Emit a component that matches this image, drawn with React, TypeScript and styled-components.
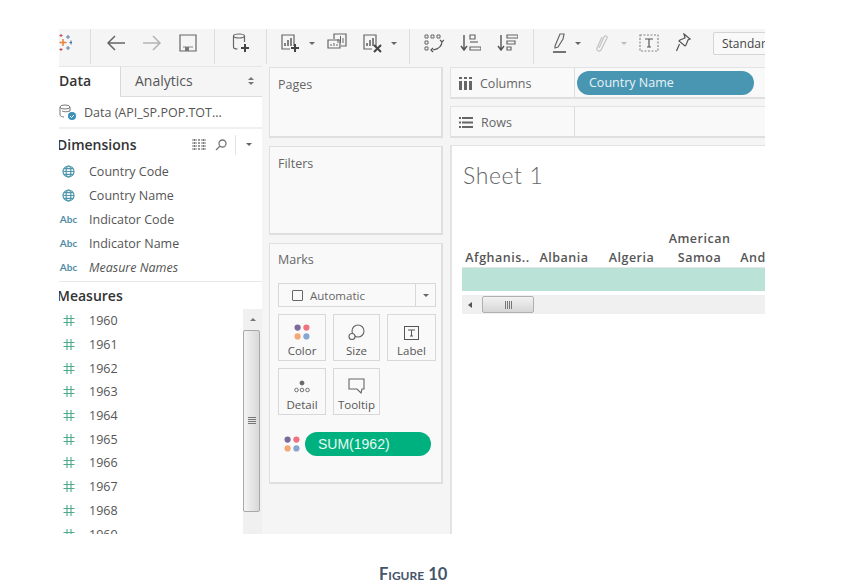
import styled, { createGlobalStyle } from "styled-components";
import type { ReactNode } from "react";

const GlobalStyle = createGlobalStyle`
  html, body {
    margin: 0;
    padding: 0;
    background: #fff;
    font-family: "Open Sans", "Lato", sans-serif;
  }
`;

const Page = styled.div`
  width: 859px;
  height: 588px;
  padding: 29px 0 0 59px;
  box-sizing: border-box;
  overflow: hidden;
`;

const Shot = styled.div`
  width: 706px;
  height: 505px;
  background: #f5f5f5;
  overflow: hidden;
  display: flex;
  flex-direction: column;
`;

const Toolbar = styled.div`
  height: 37px;
  flex: none;
  box-sizing: border-box;
  padding-bottom: 9px;
  display: flex;
  align-items: center;
  overflow: hidden;
`;

const ToolIcon = styled.svg<{ $ml: number }>`
  flex: none;
  margin-left: ${(p) => p.$ml}px;
`;

const ToolDivider = styled.div<{ $ml: number }>`
  flex: none;
  align-self: flex-start;
  width: 1px;
  height: 35px;
  background: #dedede;
  margin-left: ${(p) => p.$ml}px;
`;

const Caret = styled.div<{ $ml: number; $light?: boolean }>`
  flex: none;
  margin-left: ${(p) => p.$ml}px;
  width: 0;
  height: 0;
  border-left: 3px solid transparent;
  border-right: 3px solid transparent;
  border-top: 3px solid ${(p) => (p.$light ? "#bdbdbd" : "#666")};
`;

const FitSelect = styled.div`
  flex: none;
  margin-left: 22px;
  width: 80px;
  height: 23px;
  box-sizing: border-box;
  padding-left: 8px;
  border: 1px solid #d4d4d4;
  border-radius: 2px;
  font-size: 12px;
  line-height: 21px;
  color: #444;
  background: #f9f9f9;
  overflow: hidden;
  white-space: nowrap;
`;

const Workspace = styled.div`
  flex: 1;
  min-height: 0;
  display: grid;
  grid-template-columns: 203px 174px 1fr;
  column-gap: 7px;
`;

const LeftPane = styled.div`
  background: #fff;
  display: flex;
  flex-direction: column;
  min-height: 0;
  overflow: hidden;
  border-top: 1px solid #e6e6e6;
`;

const TabRow = styled.div`
  display: flex;
  height: 30px;
  flex: none;
`;

const DataTab = styled.div`
  width: 61px;
  font-size: 14px;
  font-weight: 600;
  color: #333;
  line-height: 28px;
  box-sizing: border-box;
`;

const AnalyticsTab = styled.div`
  flex: 1;
  display: flex;
  align-items: center;
  justify-content: space-between;
  padding: 0 8px 2px 14px;
  background: #f5f5f5;
  border-left: 1px solid #d8d8d8;
  border-bottom: 1px solid #dcdcdc;
  font-size: 14px;
  color: #555;
`;

const SortArrows = styled.div`
  display: flex;
  flex-direction: column;
  gap: 2px;
`;

const ArrowUp = styled.div`
  width: 0;
  height: 0;
  border-left: 3px solid transparent;
  border-right: 3px solid transparent;
  border-bottom: 3px solid #777;
`;

const ArrowDown = styled(ArrowUp)`
  border-bottom: none;
  border-top: 3px solid #777;
`;

const SourceRow = styled.div`
  height: 32px;
  flex: none;
  display: flex;
  align-items: center;
  gap: 7px;
  font-size: 12.5px;
  color: #555;
  border-bottom: 2px solid #f0f0f0;
  box-sizing: border-box;
`;

const SectionHead = styled.div<{ $h: number }>`
  height: ${(p) => p.$h}px;
  flex: none;
  display: flex;
  align-items: center;
  justify-content: space-between;
  font-size: 14px;
  font-weight: 600;
  color: #333;
  margin-left: -2px;
`;

const HeadTools = styled.div`
  display: flex;
  align-items: center;
  gap: 9px;
  padding-right: 10px;
`;

const HeadDivider = styled.div`
  width: 1px;
  height: 20px;
  background: #e4e4e4;
  margin: 0 1px 0 -1px;
`;

const FieldList = styled.div`
  display: flex;
  flex-direction: column;
`;

const FieldRow = styled.div<{ $h: number }>`
  height: ${(p) => p.$h}px;
  flex: none;
  display: flex;
  align-items: center;
  font-size: 12.5px;
  color: #555;
`;

const FieldIcon = styled.div`
  width: 30px;
  flex: none;
  display: flex;
  justify-content: center;
  padding-right: 11px;
  box-sizing: border-box;
`;

const AbcMark = styled.span`
  font-family: "Lato", sans-serif;
  font-size: 10px;
  font-weight: 700;
  color: #4f8ca6;
`;

const FieldName = styled.span<{ $italic?: boolean }>`
  font-style: ${(p) => (p.$italic ? "italic" : "normal")};
`;

const Separator = styled.div`
  height: 1px;
  flex: none;
  background: #e8e8e8;
  margin-top: 2px;
`;

const MeasureArea = styled.div`
  flex: 1;
  min-height: 0;
  display: grid;
  grid-template-columns: 1fr 19px;
  overflow: hidden;
`;

const ScrollTrack = styled.div`
  background: #f0f0f0;
  display: flex;
  flex-direction: column;
`;

const ScrollArrow = styled.div`
  flex: none;
  height: 21px;
  display: flex;
  align-items: center;
  justify-content: center;
`;

const ScrollThumb = styled.div`
  width: 17px;
  height: 182px;
  flex: none;
  box-sizing: border-box;
  border: 1px solid #a9a9a9;
  border-radius: 2px;
  background: linear-gradient(90deg, #f4f4f4, #d8d8d8);
  display: flex;
  align-items: center;
  justify-content: center;
`;

const Grip = styled.div<{ $vertical?: boolean }>`
  width: ${(p) => (p.$vertical ? 8 : 7)}px;
  height: ${(p) => (p.$vertical ? 7 : 8)}px;
  background: repeating-linear-gradient(
    ${(p) => (p.$vertical ? "0deg" : "90deg")},
    #777 0 1px,
    transparent 1px 2px
  );
`;

const MiddleColumn = styled.div`
  display: flex;
  flex-direction: column;
  gap: 8px;
  padding-top: 1px;
`;

const Card = styled.div<{ $h: number }>`
  height: ${(p) => p.$h}px;
  flex: none;
  box-sizing: border-box;
  background: #f9f9f9;
  border: 1px solid #dfdfdf;
  border-width: 1px 2px 2px 1px;
  font-size: 12.5px;
  color: #666;
`;

const CardTitle = styled.div`
  padding: 8px 8px 0;
`;

const MarksCard = styled(Card)`
  display: flex;
  flex-direction: column;
  padding: 0 5px 0 8px;
`;

const MarksTitle = styled.div`
  margin-top: 8px;
  line-height: 16px;
`;

const MarkType = styled.div`
  height: 24px;
  margin-top: 15px;
  box-sizing: border-box;
  border: 1px solid #d8d8d8;
  display: grid;
  grid-template-columns: 1fr 20px;
  font-size: 11.5px;
  color: #666;
`;

const MarkTypeLabel = styled.div`
  display: flex;
  align-items: center;
  gap: 7px;
  padding-left: 13px;
`;

const MarkBox = styled.div`
  width: 9px;
  height: 9px;
  border: 1px solid #666;
  border-radius: 1px;
`;

const MarkTypeCaret = styled.div`
  border-left: 1px solid #d8d8d8;
  display: flex;
  align-items: center;
  justify-content: center;
`;

const MarkGrid = styled.div`
  display: grid;
  grid-template-columns: 48px 47px 49px;
  grid-auto-rows: 47px;
  gap: 7px;
  margin-top: 7px;
`;

const MarkButton = styled.div`
  box-sizing: border-box;
  border: 1px solid #d8d8d8;
  display: flex;
  flex-direction: column;
  align-items: center;
  justify-content: flex-end;
  padding-bottom: 2px;
  gap: 3px;
  font-size: 11.5px;
  color: #555;
`;

const PillRow = styled.div`
  display: flex;
  align-items: center;
  gap: 5px;
  margin: 17px 0 0 6px;
`;

const GreenPill = styled.div`
  width: 126px;
  height: 24px;
  flex: none;
  border-radius: 12px;
  background: #00b180;
  color: #e9f8f2;
  font-family: "Liberation Sans", sans-serif;
  font-size: 14px;
  line-height: 24px;
  padding-left: 13px;
  box-sizing: border-box;
`;

const RightColumn = styled.div`
  display: flex;
  flex-direction: column;
  gap: 7px;
  min-width: 0;
  padding-top: 1px;
`;

const Shelf = styled.div`
  height: 32px;
  flex: none;
  box-sizing: border-box;
  background: #f9f9f9;
  border-top: 1px solid #e3e3e3;
  border-bottom: 2px solid #dfdfdf;
  border-left: 1px solid #e3e3e3;
  display: grid;
  grid-template-columns: 124px 1fr;
`;

const ShelfLabel = styled.div`
  display: flex;
  align-items: center;
  gap: 8px;
  padding: 1px 0 0 8px;
  border-right: 1px solid #dcdcdc;
  font-size: 12.5px;
  color: #666;
`;

const ShelfBody = styled.div`
  display: flex;
  align-items: center;
  padding-left: 2px;
`;

const BluePill = styled.div`
  width: 177px;
  height: 24px;
  border-radius: 12px;
  background: #4996b2;
  color: #e8f3f7;
  font-size: 12.5px;
  line-height: 24px;
  padding-left: 12px;
  box-sizing: border-box;
`;

const ViewPanel = styled.div`
  flex: 1;
  min-height: 0;
  background: #fff;
  border-left: 2px solid #e3e3e3;
  border-top: 1px solid #e3e3e3;
  padding-left: 10px;
  overflow: hidden;
`;

const SheetTitle = styled.div`
  margin-top: 14px;
  padding-left: 1px;
  font-family: "Lato", sans-serif;
  font-size: 23px;
  font-weight: 300;
  line-height: 30px;
  color: #666;
  letter-spacing: 0.6px;
`;

const HeaderRow = styled.div`
  margin-top: 32px;
  height: 45px;
  display: flex;
  align-items: flex-end;
  white-space: nowrap;
  overflow: hidden;
`;

const ColumnHead = styled.div<{ $w: number }>`
  flex: none;
  width: ${(p) => p.$w}px;
  text-align: center;
  font-size: 12.5px;
  font-weight: 600;
  line-height: 18.500px;
  color: #555;
  letter-spacing: 0.5px;
`;

const Band = styled.div`
  height: 24px;
  background: #bae2d6;
  border-top: 1px solid #e6e6e6;
  box-sizing: border-box;
`;

const HScroll = styled.div`
  margin-top: 4px;
  height: 19px;
  background: #f0f0f0;
  display: flex;
  align-items: center;
  padding-left: 6px;
  gap: 10px;
`;

const ArrowLeft = styled.div`
  width: 0;
  height: 0;
  border-top: 3px solid transparent;
  border-bottom: 3px solid transparent;
  border-right: 4px solid #555;
`;

const HThumb = styled.div`
  width: 52px;
  height: 17px;
  box-sizing: border-box;
  border: 1px solid #b0b0b0;
  border-radius: 2px;
  background: linear-gradient(180deg, #f2f2f2, #d6d6d6);
  display: flex;
  align-items: center;
  justify-content: center;
`;

const Caption = styled.div`
  margin: 30px 0 0 -59px;
  width: 859px;
  padding-left: 379px;
  box-sizing: border-box;
  font-family: "Lato", "Open Sans", sans-serif;
  font-variant: small-caps;
  font-weight: 700;
  font-size: 16.5px;
  line-height: 20px;
  color: #44546a;
`;

const Globe = () => (
  <svg width="13" height="13" viewBox="0 0 13 13" fill="none" stroke="#4f97ad" strokeWidth="1.2">
    <circle cx="6.5" cy="6.5" r="5.5" />
    <ellipse cx="6.5" cy="6.5" rx="2.4" ry="5.5" />
    <path d="M1 6.5h11M1.8 3.7h9.4M1.8 9.3h9.4" />
  </svg>
);

const Hash = () => (
  <svg width="12" height="13" viewBox="0 0 12 13" fill="none" stroke="#4fa98b" strokeWidth="1.1">
    <path d="M4 1v11M8 1v11M0.5 4.5h11M0.5 8.5h11" />
  </svg>
);

const Dots = () => (
  <svg width="16" height="16" viewBox="0 0 16 16">
    <circle cx="3.6" cy="3.6" r="3.1" fill="#7b6b9a" />
    <circle cx="12.4" cy="3.6" r="3.1" fill="#f0717f" />
    <circle cx="3.6" cy="12.4" r="3.1" fill="#f2a877" />
    <circle cx="12.4" cy="12.4" r="3.1" fill="#86a7d0" />
  </svg>
);

const Tool = ({ ml, w = 20, h = 22, children }: { ml: number; w?: number; h?: number; children: ReactNode }) => (
  <ToolIcon $ml={ml} width={w} height={h} viewBox={`0 0 ${w} ${h}`} fill="none" stroke="#666" strokeWidth={1.2}>
    {children}
  </ToolIcon>
);

const BarsBox = () => (
  <>
    <path d="M14 13V2H2v14h8" />
    <path d="M5 13v-3M8 13V7M11 13V5" strokeWidth="1.6" />
  </>
);

const dimensions = [
  { name: "Country Code", kind: "geo" },
  { name: "Country Name", kind: "geo" },
  { name: "Indicator Code", kind: "abc" },
  { name: "Indicator Name", kind: "abc" },
  { name: "Measure Names", kind: "abc", italic: true },
];

const measures = ["1960", "1961", "1962", "1963", "1964", "1965", "1966", "1967", "1968", "1969"];

const columns = [
  { label: "Afghanis..", w: 71 },
  { label: "Albania", w: 62 },
  { label: "Algeria", w: 73 },
  { label: "American Samoa", w: 63 },
  { label: "And", w: 44 },
];

export default function App() {
  return (
    <Page>
      <GlobalStyle />
      <Shot>
        <Toolbar>
          <Tool ml={0} w={13} h={22}>
            <path d="M4 7v7M0.500 10.500h7" stroke="#e8833a" strokeWidth="1.5" />
            <path d="M9 3v4M7 5h4M9 14v4M7 16h4" stroke="#5b7fa6" strokeWidth="1" />
            <path d="M2 2v3M0.500 3.500h3M2 16v3M0.500 17.500h3" stroke="#c9485b" strokeWidth="1" />
            <path d="M12 8.500v4M10.500 10.500h2.500" stroke="#3f6f9a" strokeWidth="1" />
          </Tool>
          <ToolDivider $ml={18} />
          <Tool ml={15} w={20} h={18}>
            <path d="M19 9H2M9 2L2 9l7 7" strokeWidth="1.5" />
          </Tool>
          <Tool ml={16} w={20} h={18}>
            <path d="M1 9h17M11 2l7 7-7 7" stroke="#b4b4b4" strokeWidth="1.5" />
          </Tool>
          <Tool ml={17} w={18} h={18}>
            <path d="M1 1h16v16H1z" />
            <path d="M4 13h10" stroke="#999" />
            <path d="M6 13h4v4H6z" fill="#777" stroke="none" />
          </Tool>
          <ToolDivider $ml={17} />
          <Tool ml={17} w={18} h={20}>
            <ellipse cx="7" cy="3" rx="5.500" ry="2" />
            <path d="M1.500 3v11c0 1.200 2 2 4 2M12.500 3v6" />
            <path d="M13 11v8M9 15h8" stroke="#444" strokeWidth="2" />
          </Tool>
          <ToolDivider $ml={16} />
          <Tool ml={13} w={21} h={20}>
            <BarsBox />
            <path d="M15 11v8M11 15h8" stroke="#444" strokeWidth="2" />
          </Tool>
          <Caret $ml={8} />
          <Tool ml={12} w={20} h={20}>
            <path d="M7 6V1h12v12h-5M1 7h12v8H1z" />
            <path d="M11 10V6M13.500 10V3M16 10V5M4 13v-2M7 13v-3M10 13v-2" strokeWidth="1" />
          </Tool>
          <Tool ml={15} w={21} h={20}>
            <BarsBox />
            <path d="M12 12l7 7M19 12l-7 7" stroke="#444" strokeWidth="2" />
          </Tool>
          <Caret $ml={8} />
          <ToolDivider $ml={12} />
          <Tool ml={14} w={20} h={20}>
            <path d="M1 2h3v3H1zM7 2h3v3H7zM13 2h3v3h-3zM1 8h3v3H1zM1 14h3v3H1z" strokeWidth="1" />
            <path d="M18 8c0 5-3 8-9 9M16 7l2 2 2-2M9 15l-2 2 2 2" stroke="#555" />
          </Tool>
          <Tool ml={16} w={21} h={20}>
            <path d="M4 2v14M1 13l3 4 3-4" stroke="#555" strokeWidth="1.4" />
            <path d="M10 2h5v4h-5zM10 14h11v3H10z" />
            <path d="M10 9h8" />
          </Tool>
          <Tool ml={16} w={21} h={20}>
            <path d="M4 2v14M1 13l3 4 3-4" stroke="#555" strokeWidth="1.4" />
            <path d="M10 2h11v3H10zM10 8h8v3h-8zM10 14h4v3h-4z" />
          </Tool>
          <ToolDivider $ml={15} />
          <Tool ml={18} w={15} h={22}>
            <path d="M3 14L8 2h4l-1 5-5 8-3 1z" />
            <path d="M1 20h13" strokeWidth="1.8" />
          </Tool>
          <Caret $ml={8} />
          <Tool ml={13} w={14} h={20}>
            <path d="M5 15l5-11c1-2 4-1 3 1L7 17c-1 2-5 1-4-2L8 4" stroke="#c4c4c4" />
          </Tool>
          <Caret $ml={13} $light />
          <Tool ml={12} w={20} h={20}>
            <rect x="1" y="2" width="18" height="16" strokeDasharray="2 1.500" stroke="#888" />
            <path d="M6 6h8M10 6v8M8 14h4" stroke="#555" />
          </Tool>
          <Tool ml={16} w={16} h={20}>
            <path d="M9 1l6 5-2 1-2 5-1 1-6-5 1-1 5-2zM4.500 11l-3 7" stroke="#555" />
          </Tool>
          <FitSelect>Standard</FitSelect>
        </Toolbar>
        <Workspace>
          <LeftPane>
            <TabRow>
              <DataTab>Data</DataTab>
              <AnalyticsTab>
                Analytics
                <SortArrows>
                  <ArrowUp />
                  <ArrowDown />
                </SortArrows>
              </AnalyticsTab>
            </TabRow>
            <SourceRow>
              <svg width="18" height="18" viewBox="0 0 18 18" fill="none" stroke="#777" strokeWidth="1">
                <ellipse cx="6" cy="4" rx="5" ry="2" />
                <path d="M1 4v8c0 1 2 2 4 2M11 4v4M3 8c2 1 5 1 8 0" />
                <circle cx="13" cy="13" r="4" fill="#3c8fb5" stroke="none" />
                <path d="M11 13l1.500 1.500L15 12" stroke="#fff" />
              </svg>
              Data (API_SP.POP.TOT...
            </SourceRow>
            <SectionHead $h={31}>
              Dimensions
              <HeadTools>
                <svg width="14" height="11" viewBox="0 0 14 11" fill="none" stroke="#777" strokeWidth="1">
                  <path d="M0 1h14M0 4h14M0 7h14M0 10h14M2.500 0v11M7 0v11M11.500 0v11" strokeDasharray="2 1" />
                </svg>
                <svg width="12" height="12" viewBox="0 0 12 12" fill="none" stroke="#777" strokeWidth="1.300">
                  <circle cx="7.500" cy="4.500" r="3.500" />
                  <path d="M5 7l-4 4" />
                </svg>
                <HeadDivider />
                <Caret $ml={0} />
              </HeadTools>
            </SectionHead>
            <FieldList>
              {dimensions.map((d) => (
                <FieldRow key={d.name} $h={23.8}>
                  <FieldIcon>{d.kind === "geo" ? <Globe /> : <AbcMark>Abc</AbcMark>}</FieldIcon>
                  <FieldName $italic={d.italic}>{d.name}</FieldName>
                </FieldRow>
              ))}
            </FieldList>
            <Separator />
            <SectionHead $h={27}>Measures</SectionHead>
            <MeasureArea>
              <FieldList>
                {measures.map((m) => (
                  <FieldRow key={m} $h={23.7}>
                    <FieldIcon>
                      <Hash />
                    </FieldIcon>
                    <FieldName>{m}</FieldName>
                  </FieldRow>
                ))}
              </FieldList>
              <ScrollTrack>
                <ScrollArrow>
                  <ArrowUp />
                </ScrollArrow>
                <ScrollThumb>
                  <Grip $vertical />
                </ScrollThumb>
              </ScrollTrack>
            </MeasureArea>
          </LeftPane>
          <MiddleColumn>
            <Card $h={71}>
              <CardTitle>Pages</CardTitle>
            </Card>
            <Card $h={89}>
              <CardTitle>Filters</CardTitle>
            </Card>
            <MarksCard $h={241}>
              <MarksTitle>Marks</MarksTitle>
              <MarkType>
                <MarkTypeLabel>
                  <MarkBox />
                  Automatic
                </MarkTypeLabel>
                <MarkTypeCaret>
                  <Caret $ml={0} />
                </MarkTypeCaret>
              </MarkType>
              <MarkGrid>
                <MarkButton>
                  <Dots />
                  Color
                </MarkButton>
                <MarkButton>
                  <svg width="17" height="16" viewBox="0 0 17 16" fill="none" stroke="#666" strokeWidth="1.100">
                    <circle cx="10" cy="7" r="6" />
                    <circle cx="4" cy="12.500" r="3" fill="#f9f9f9" />
                  </svg>
                  Size
                </MarkButton>
                <MarkButton>
                  <svg width="15" height="14" viewBox="0 0 15 14" fill="none" stroke="#555" strokeWidth="1">
                    <rect x="0.500" y="0.500" width="14" height="13" />
                    <path d="M4 4h7M7.500 4v6M6 10h3" />
                  </svg>
                  Label
                </MarkButton>
                <MarkButton>
                  <svg width="16" height="14" viewBox="0 0 16 14" fill="none" stroke="#666" strokeWidth="0.900">
                    <circle cx="8" cy="3" r="2" fill="#666" />
                    <circle cx="2.500" cy="10" r="1.800" />
                    <circle cx="8" cy="10" r="1.800" />
                    <circle cx="13.500" cy="10" r="1.800" />
                  </svg>
                  Detail
                </MarkButton>
                <MarkButton>
                  <svg width="17" height="16" viewBox="0 0 17 16" fill="none" stroke="#666" strokeWidth="1.100">
                    <path d="M1 1h15v10h-2l-1 4-4-4H1z" />
                  </svg>
                  Tooltip
                </MarkButton>
              </MarkGrid>
              <PillRow>
                <Dots />
                <GreenPill>SUM(1962)</GreenPill>
              </PillRow>
            </MarksCard>
          </MiddleColumn>
          <RightColumn>
            <Shelf>
              <ShelfLabel>
                <svg width="13" height="13" viewBox="0 0 13 13" fill="#666">
                  <path d="M0 4h3v9H0zM5 4h3v9H5zM10 4h3v9h-3zM0 0h3v2H0zM5 0h3v2H5zM10 0h3v2h-3z" />
                </svg>
                Columns
              </ShelfLabel>
              <ShelfBody>
                <BluePill>Country Name</BluePill>
              </ShelfBody>
            </Shelf>
            <Shelf>
              <ShelfLabel>
                <svg width="14" height="11" viewBox="0 0 14 11" fill="#666">
                  <path d="M0 0h2v2H0zM3 0h11v2H3zM0 4.500h2v2H0zM3 4.500h11v2H3zM0 9h2v2H0zM3 9h11v2H3z" />
                </svg>
                Rows
              </ShelfLabel>
              <ShelfBody />
            </Shelf>
            <ViewPanel>
              <SheetTitle>Sheet 1</SheetTitle>
              <HeaderRow>
                {columns.map((c) => (
                  <ColumnHead key={c.label} $w={c.w}>
                    {c.label === "American Samoa" ? (
                      <>
                        American
                        <br />
                        Samoa
                      </>
                    ) : (
                      c.label
                    )}
                  </ColumnHead>
                ))}
              </HeaderRow>
              <Band />
              <HScroll>
                <ArrowLeft />
                <HThumb>
                  <Grip />
                </HThumb>
              </HScroll>
            </ViewPanel>
          </RightColumn>
        </Workspace>
      </Shot>
      <Caption>Figure 10</Caption>
    </Page>
  );
}
